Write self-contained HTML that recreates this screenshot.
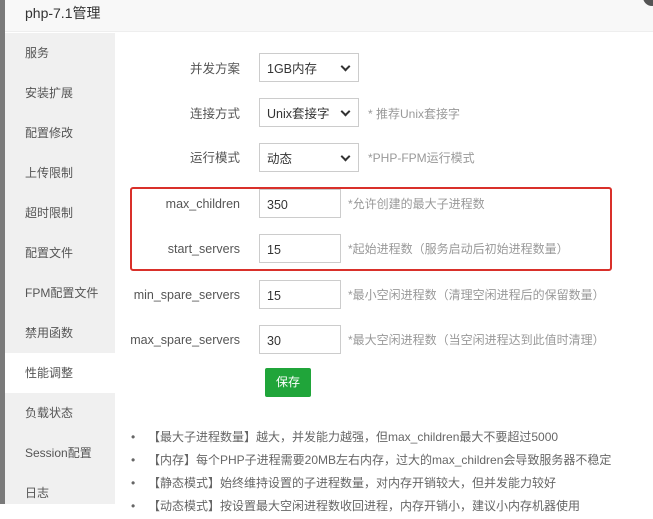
<!DOCTYPE html>
<html><head><meta charset="utf-8"><style>
*{box-sizing:border-box;margin:0;padding:0}
body{width:653px;height:504px;overflow:hidden;background:#fff;font-family:"Liberation Sans","Noto Sans CJK SC",sans-serif;font-size:12px;color:#555;position:relative}
.strip{position:absolute;left:0;top:0;width:5px;height:504px;background:#7a7a7a}
.title{position:absolute;left:5px;top:0;width:648px;height:32px;background:#f8f8f8;border-bottom:1px solid #eee;font-size:14px;color:#333;padding-left:20px;line-height:26px}
.close{position:absolute;right:-8px;top:-12px;width:18px;height:18px;border-radius:50%;background:#555}
.side{position:absolute;left:5px;top:33px;width:110px;height:471px;background:#f0f0f0}
.side div{height:40px;line-height:40px;padding-left:20px;color:#555;font-size:12px}
.side div.act{background:#fff}
.lab{position:absolute;right:413px;width:150px;text-align:right;color:#555;font-size:12.5px;line-height:16px}
.in{position:absolute;left:259px;height:29px;border:1px solid #ccc;padding-left:7px;display:flex;align-items:center;color:#333;font-size:12.5px;line-height:16px;background:#fff;padding-top:2px}
.sel{width:100px}
.sel:after{content:"";position:absolute;right:9px;top:9px;width:5px;height:5px;border-right:2px solid #333;border-bottom:2px solid #333;transform:rotate(45deg)}
.txt{width:82px}
.tip{position:absolute;left:368px;color:#999;font-size:12px;line-height:16px}
.red{position:absolute;left:130px;top:187px;width:482px;height:84px;border:2px solid #d9302a;border-radius:3px}
.btn{position:absolute;left:265px;top:368px;width:46px;height:29px;background:#20a53a;color:#fff;border-radius:2px;text-align:center;line-height:29px;font-size:12px}
ul{position:absolute;left:131px;top:427px;list-style:none}
li{height:23px;line-height:20px;font-size:12px;color:#666;white-space:nowrap}
li:before{content:"•";display:inline-block;width:17px;color:#666}
</style></head><body>
<div class="strip"></div>
<div class="title">php-7.1管理<div class="close"></div></div>
<div class="side">
<div>服务</div><div>安装扩展</div><div>配置修改</div><div>上传限制</div><div>超时限制</div><div>配置文件</div><div>FPM配置文件</div><div>禁用函数</div><div class="act">性能调整</div><div>负载状态</div><div>Session配置</div><div>日志</div>
</div>
<div class="lab" style="top:61px">并发方案</div>
<div class="in sel" style="top:53px">1GB内存</div>
<div class="lab" style="top:106px">连接方式</div>
<div class="in sel" style="top:98px">Unix套接字</div>
<div class="tip" style="top:106px">* 推荐Unix套接字</div>
<div class="lab" style="top:150px">运行模式</div>
<div class="in sel" style="top:143px">动态</div>
<div class="tip" style="top:150px">*PHP-FPM运行模式</div>
<div class="red"></div>
<div class="lab" style="top:196px">max_children</div>
<div class="in txt" style="top:189px">350</div>
<div class="tip" style="left:348px;top:196px">*允许创建的最大子进程数</div>
<div class="lab" style="top:241px">start_servers</div>
<div class="in txt" style="top:234px">15</div>
<div class="tip" style="left:348px;top:241px">*起始进程数（服务启动后初始进程数量）</div>
<div class="lab" style="top:287px">min_spare_servers</div>
<div class="in txt" style="top:280px">15</div>
<div class="tip" style="left:348px;top:287px">*最小空闲进程数（清理空闲进程后的保留数量）</div>
<div class="lab" style="top:332px">max_spare_servers</div>
<div class="in txt" style="top:325px">30</div>
<div class="tip" style="left:348px;top:332px">*最大空闲进程数（当空闲进程达到此值时清理）</div>
<div class="btn">保存</div>
<ul>
<li>【最大子进程数量】越大，并发能力越强，但max_children最大不要超过5000</li>
<li>【内存】每个PHP子进程需要20MB左右内存，过大的max_children会导致服务器不稳定</li>
<li>【静态模式】始终维持设置的子进程数量，对内存开销较大，但并发能力较好</li>
<li>【动态模式】按设置最大空闲进程数收回进程，内存开销小，建议小内存机器使用</li>
</ul>
</body></html>
